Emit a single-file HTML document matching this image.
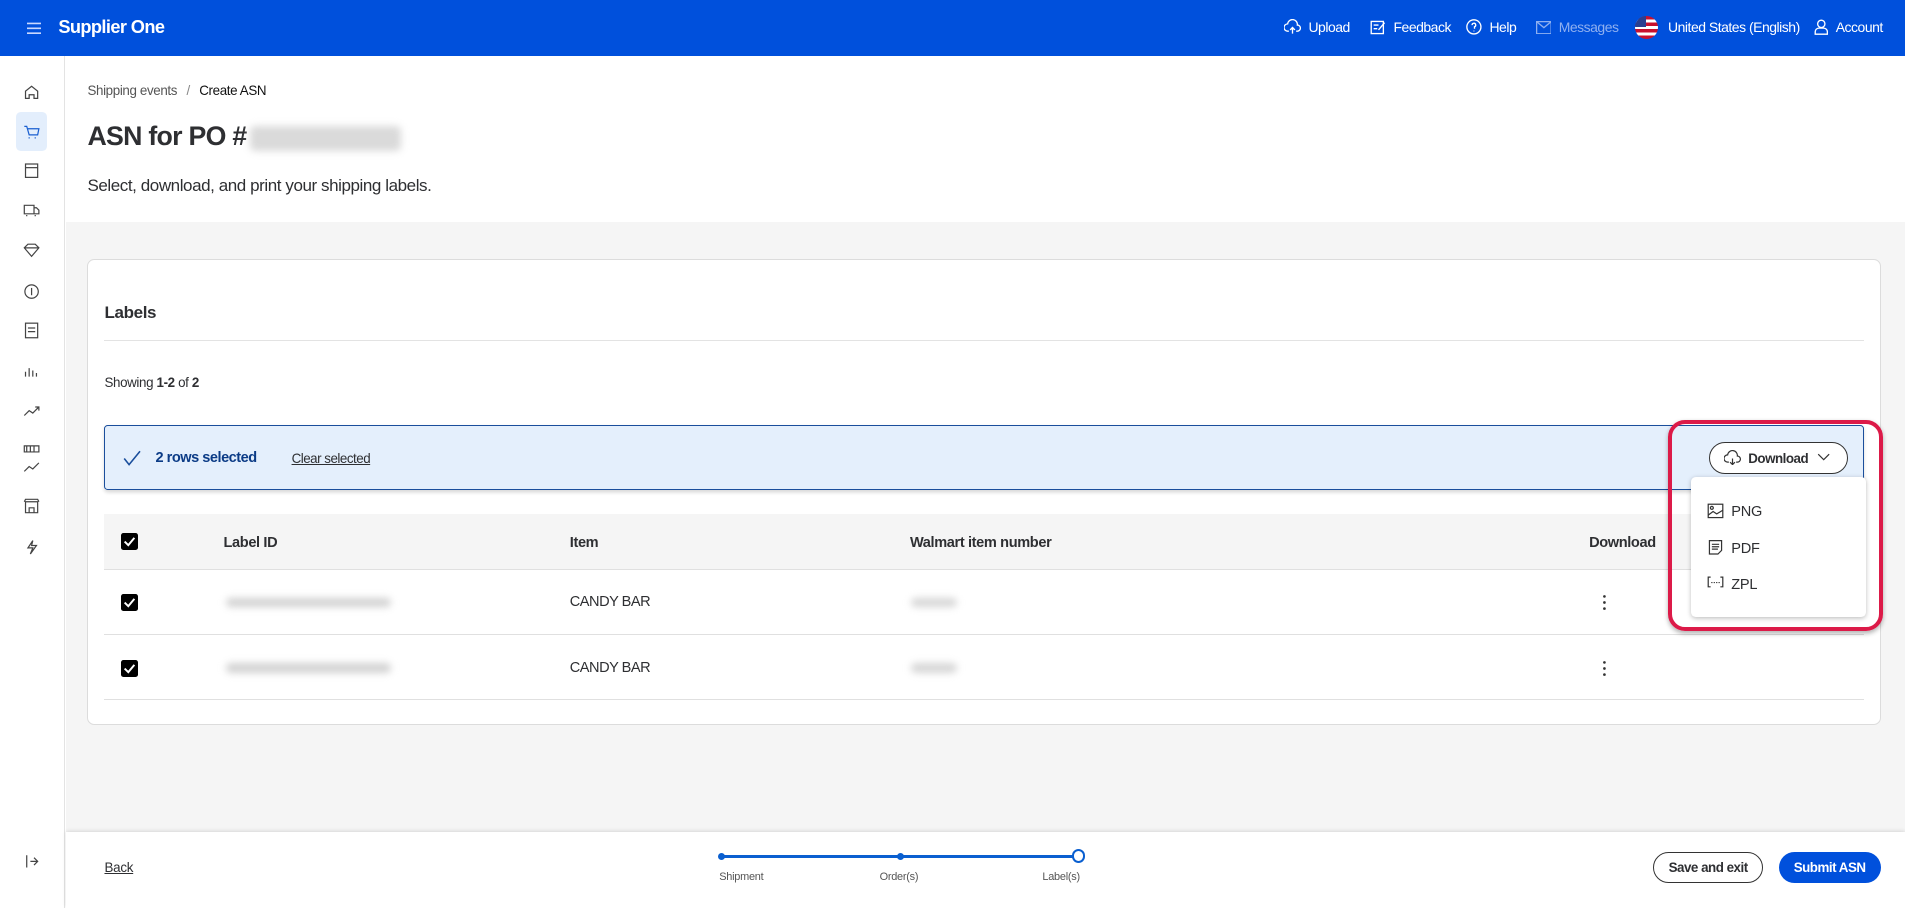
<!DOCTYPE html>
<html><head><meta charset="utf-8"><style>
html{zoom:1.2149}
body{margin:0;width:1568px;height:747px;position:relative;overflow:hidden;font-family:"Liberation Sans",sans-serif;color:#2e2f32;background:#fff;letter-spacing:-0.2px}
.a{position:absolute}
.top{left:0;top:0;width:1568px;height:46px;background:#0050dc;color:#fff}
.nav{font-size:11.5px;top:16px;color:#fff;white-space:nowrap;letter-spacing:-0.4px}
.side{left:0;top:46px;width:53px;height:701px;border-right:1px solid #e3e3e3;background:#fff}
.blur{background:#b9b9b9;filter:blur(3px);border-radius:4px}
.cb{width:14px;height:14px;background:#000;border-radius:2px}
.cb svg{display:block}
.th{font-size:12px;font-weight:bold;top:440px;letter-spacing:-0.3px}
.td{font-size:12px}
</style></head><body>
<div class="a top">
 <svg class="a" style="left:22px;top:17px" width="12" height="12"><path d="M0 2h12M0 6h12M0 10h12" stroke="#c9d8ff" stroke-width="1.3"/></svg>
 <div class="a" style="left:48px;top:14px;font-size:15px;font-weight:bold;letter-spacing:-0.5px">Supplier One</div>
 <svg class="a" style="left:1057px;top:16px" width="14" height="13" fill="none" stroke="#fff" stroke-width="1.1"><path d="M4 10H3a3 3 0 0 1 0-6 4 4 0 0 1 8 1 2.5 2.5 0 0 1 0 5h-1M7 12V7M5 9l2-2 2 2"/></svg>
 <div class="a nav" style="left:1077px">Upload</div>
 <svg class="a" style="left:1128px;top:16px" width="13" height="13" fill="none" stroke="#fff" stroke-width="1.1"><rect x="1" y="2" width="10" height="10"/><path d="M3 5h4M3 8h3M7 9l5-6"/></svg>
 <div class="a nav" style="left:1147px">Feedback</div>
 <svg class="a" style="left:1207px;top:16px" width="13" height="13" fill="none" stroke="#fff" stroke-width="1.1"><circle cx="6.5" cy="6.5" r="5.8"/><path d="M5 5a1.5 1.5 0 1 1 2 1.4V8M6.5 9.6v.6"/></svg>
 <div class="a nav" style="left:1226px">Help</div>
 <svg class="a" style="left:1264px;top:17px" width="13" height="11" fill="none" stroke="#8fb0f0" stroke-width="1.1"><rect x=".5" y=".5" width="12" height="10"/><path d="M.5 .5l6 5 6-5"/></svg>
 <div class="a nav" style="left:1283px;color:#8fb0f0">Messages</div>
 <div class="a" style="left:1346px;top:13px;width:19px;height:19px;border-radius:50%;overflow:hidden;background:repeating-linear-gradient(#c8102e 0 2.7px,#fff 2.7px 5.4px)"><div style="width:9px;height:9px;background:#2a3f8f"></div></div>
 <div class="a nav" style="left:1373px">United States (English)</div>
 <svg class="a" style="left:1493px;top:16px" width="12" height="13" fill="none" stroke="#fff" stroke-width="1.1"><circle cx="6" cy="4" r="3"/><path d="M1 12.5v-2a3 3 0 0 1 3-3h4a3 3 0 0 1 3 3v2z"/></svg>
 <div class="a nav" style="left:1511px">Account</div>
</div>
<div class="a side"></div>
<div class="a" style="left:13px;top:92px;width:26px;height:32px;background:#e3eefc;border-radius:4px"></div>
<svg class="a" style="left:0;top:0" width="53" height="747" fill="none" stroke="#444" stroke-width="1">
 <path d="M21 81v-6l5-4 5 4v6h-3v-3h-4v3z"/>
 <path d="M20 104h2l2 7h7l1-5h-9M24 113v1M29 113v1" stroke="#1a5fd0"/>
 <rect x="21" y="135" width="10" height="11"/><path d="M21 138h10"/>
 <path d="M20 169h8v7h-8zM28 171h2l2 2v3h-4M22 177v1M29 177v1"/>
 <path d="M20 204l3-3h6l3 3-6 7z M20 204h12"/>
 <circle cx="26" cy="240" r="5.5"/><path d="M26 237v6"/>
 <rect x="21" y="266" width="10" height="12"/><path d="M23 270h6M23 273h6"/>
 <path d="M21 310v-4M24 310v-7M27 310v-5M30 310v-3"/>
 <path d="M20 342l4-4 3 2 5-5M29 335h3v3"/>
 <path d="M20 367h12v5h-12zM22 367v5M25 367v5M28 367v5M20 388l4-4 3 2 5-5"/>
 <path d="M21 413h10v9h-10zM20 413l1-2h10l1 2M24 422v-4h4v4"/>
 <path d="M27 445l-4 6h4l-2 5 5-7h-4z"/>
 <path d="M22 704v10M25 709h6M28 706l3 3-3 3"/>
</svg>
<div class="a" style="left:54px;top:183px;width:1514px;height:502px;background:#f5f5f5"></div>
<div class="a" style="left:72px;top:68px;font-size:11px;color:#555;letter-spacing:-0.3px">Shipping events <span style="margin:0 5px;color:#888">/</span> <span style="color:#111">Create ASN</span></div>
<div class="a" style="left:72px;top:100px;font-size:22px;font-weight:bold;letter-spacing:-0.6px;color:#2e2f32">ASN for PO #</div>
<div class="a blur" style="left:206px;top:104px;width:124px;height:20px;background:#dadada"></div>
<div class="a" style="left:72px;top:145px;font-size:14px;color:#2e2f32;letter-spacing:-0.35px">Select, download, and print your shipping labels.</div>
<div class="a" style="left:72px;top:213px;width:1476px;height:384px;background:#fff;border:1px solid #dcdcdc;border-radius:6px;box-sizing:border-box"></div>
<div class="a" style="left:86px;top:249px;font-size:14px;font-weight:bold;letter-spacing:-0.3px">Labels</div>
<div class="a" style="left:86px;top:280px;width:1448px;height:1px;background:#e3e3e3"></div>
<div class="a" style="left:86px;top:309px;font-size:11px;letter-spacing:-0.3px">Showing <b>1-2</b> of <b>2</b></div>
<div class="a" style="left:86px;top:350px;width:1448px;height:53px;background:#e4effc;border:1px solid #1a4e9c;border-radius:3px;box-sizing:border-box;box-shadow:0 2px 3px rgba(0,0,0,.15)"></div>
<svg class="a" style="left:101px;top:370px" width="16" height="14" fill="none" stroke="#1a4e9c" stroke-width="1.3"><path d="M1 7l4 5 9-11"/></svg>
<div class="a" style="left:128px;top:370px;font-size:12px;font-weight:bold;color:#0b3b86;letter-spacing:-0.4px">2 rows selected</div>
<div class="a" style="left:240px;top:371px;font-size:11px;text-decoration:underline;color:#2e2f32;letter-spacing:-0.4px">Clear selected</div>
<div class="a" style="left:1407px;top:364px;width:114px;height:26px;border:1px solid #333;border-radius:14px;background:#fff;box-sizing:border-box"></div>
<svg class="a" style="left:1419px;top:370px" width="14" height="13" fill="none" stroke="#333" stroke-width="1"><path d="M4 10H3a3 3 0 0 1 0-6 4 4 0 0 1 8 1 2.5 2.5 0 0 1 0 5h-1M7 7v5M5 10l2 2 2-2"/></svg>
<div class="a" style="left:1439px;top:371px;font-size:11px;font-weight:bold;letter-spacing:-0.4px">Download</div>
<svg class="a" style="left:1496px;top:373px" width="11" height="7" fill="none" stroke="#333"><path d="M1 1l4.5 4.5L10 1"/></svg>
<div class="a" style="left:86px;top:423px;width:1448px;height:46px;background:#f5f5f5;border-bottom:1px solid #e0e0e0;box-sizing:border-box"></div>
<div class="a" style="left:86px;top:522px;width:1448px;height:1px;background:#e0e0e0"></div>
<div class="a" style="left:86px;top:575px;width:1448px;height:1px;background:#e0e0e0"></div>
<div class="a cb" style="left:100px;top:439px"><svg width="14" height="14" fill="none" stroke="#fff" stroke-width="1.6"><path d="M3 7l3 3 5-6"/></svg></div>
<div class="a cb" style="left:100px;top:489px"><svg width="14" height="14" fill="none" stroke="#fff" stroke-width="1.6"><path d="M3 7l3 3 5-6"/></svg></div>
<div class="a cb" style="left:100px;top:543px"><svg width="14" height="14" fill="none" stroke="#fff" stroke-width="1.6"><path d="M3 7l3 3 5-6"/></svg></div>
<div class="a th" style="left:184px">Label ID</div>
<div class="a th" style="left:469px">Item</div>
<div class="a th" style="left:749px">Walmart item number</div>
<div class="a th" style="left:1308px">Download</div>
<div class="a blur" style="left:186px;top:492px;width:136px;height:8px;background:#d2d2d2"></div>
<div class="a blur" style="left:186px;top:546px;width:136px;height:8px;background:#d2d2d2"></div>
<div class="a blur" style="left:750px;top:492px;width:38px;height:8px;background:#d6d6d6"></div>
<div class="a blur" style="left:750px;top:546px;width:38px;height:8px;background:#d6d6d6"></div>
<div class="a td" style="left:469px;top:489px;letter-spacing:-0.4px">CANDY BAR</div>
<div class="a td" style="left:469px;top:543px;letter-spacing:-0.4px">CANDY BAR</div>
<svg class="a" style="left:1319px;top:489px" width="4" height="14" fill="#333"><circle cx="2" cy="2" r="1.1"/><circle cx="2" cy="7" r="1.1"/><circle cx="2" cy="12" r="1.1"/></svg>
<svg class="a" style="left:1319px;top:543px" width="4" height="14" fill="#333"><circle cx="2" cy="2" r="1.1"/><circle cx="2" cy="7" r="1.1"/><circle cx="2" cy="12" r="1.1"/></svg>
<div class="a" style="left:1392px;top:393px;width:144px;height:115px;background:#fff;border-radius:4px;box-shadow:0 1px 4px rgba(0,0,0,.25)"></div>
<svg class="a" style="left:1405px;top:414px" width="14" height="80" fill="none" stroke="#333" stroke-width="1">
 <rect x="1" y="1" width="12" height="11"/><circle cx="4" cy="4" r="1.2"/><path d="M1 10l4-3 3 2 5-3"/>
 <path d="M2 31h10v8l-3 3H2zM4 34h6M4 36h6M4 38h5"/>
 <path d="M3 61H1v8h2M11 61h2v8h-2M4 65v1M6 65v1M8 65v1M10 65v1"/>
</svg>
<div class="a" style="left:1425px;top:415px;font-size:12px">PNG</div>
<div class="a" style="left:1425px;top:445px;font-size:12px">PDF</div>
<div class="a" style="left:1425px;top:475px;font-size:12px">ZPL</div>
<div class="a" style="left:1373px;top:346px;width:177px;height:173px;border:4px solid #dc1a48;border-radius:14px;box-sizing:border-box;box-shadow:0 2px 4px rgba(0,0,0,.3)"></div>
<div class="a" style="left:54px;top:685px;width:1514px;height:62px;background:#fff;box-shadow:0 -1px 3px rgba(0,0,0,.12)"></div>
<div class="a" style="left:86px;top:708px;font-size:11px;text-decoration:underline">Back</div>
<div class="a" style="left:594px;top:704px;width:294px;height:2px;background:#0a5fd0"></div>
<div class="a" style="left:591px;top:702px;width:6px;height:6px;border-radius:50%;background:#0a5fd0"></div>
<div class="a" style="left:738px;top:702px;width:6px;height:6px;border-radius:50%;background:#0a5fd0"></div>
<div class="a" style="left:882px;top:699px;width:8px;height:8px;border-radius:50%;background:#fff;border:2px solid #0a5fd0"></div>
<div class="a" style="left:592px;top:717px;font-size:9px;color:#555">Shipment</div>
<div class="a" style="left:724px;top:717px;font-size:9px;color:#555">Order(s)</div>
<div class="a" style="left:858px;top:717px;font-size:9px;color:#555">Label(s)</div>
<div class="a" style="left:1361px;top:701px;width:90px;height:26px;border:1px solid #333;border-radius:14px;box-sizing:border-box;font-size:11px;font-weight:bold;text-align:center;line-height:24px;letter-spacing:-0.4px">Save and exit</div>
<div class="a" style="left:1464px;top:701px;width:84px;height:26px;background:#0050dc;color:#fff;border-radius:14px;font-size:11px;font-weight:bold;text-align:center;line-height:26px;letter-spacing:-0.4px">Submit ASN</div>
</body></html>
